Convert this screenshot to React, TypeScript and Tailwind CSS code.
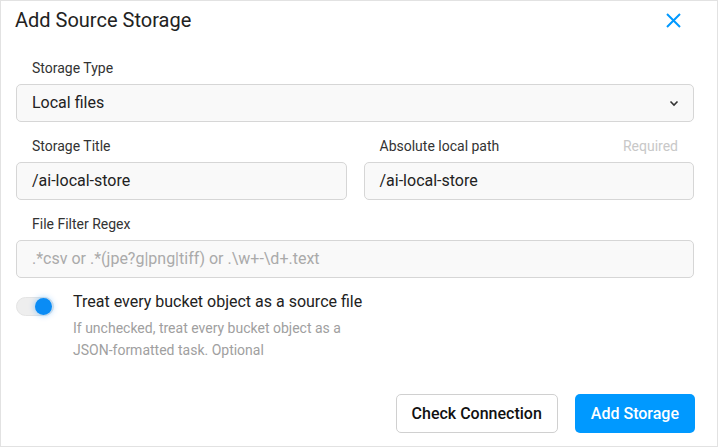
import React from "react";

function Field({ label, value, right, placeholder }: { label: string; value?: string; right?: string; placeholder?: string }) {
  return (
    <div className="flex flex-col">
      <div className="flex h-[20px] items-center justify-between px-[16px] text-[14px] leading-[20px]">
        <span className="text-[#333]">{label}</span>
        {right ? <span className="text-[#c8c8c8]">{right}</span> : null}
      </div>
      <div className="mt-[6px] flex h-[38px] items-center rounded-[5px] border border-[#d6d6d6] bg-[#f9f9f9] px-[15px] text-[16px]">
        {value ? <span className="text-[#222]">{value}</span> : <span className="text-[#aaa]">{placeholder}</span>}
      </div>
    </div>
  );
}

export default function App() {
  return (
    <div className="flex h-[447px] w-[718px] flex-col border border-[#e2e2e2] bg-white font-['Roboto','Liberation_Sans',sans-serif]">
      <div className="flex items-center justify-between pl-[14px] pr-[36px] pt-[7px]">
        <h1 className="text-[20px] leading-[24px] font-normal text-[#222]">Add Source Storage</h1>
        <svg width="15" height="15" viewBox="0 0 15 15" className="mt-[1px]">
          <path d="M1 1 L14 14 M14 1 L1 14" stroke="#0099ff" strokeWidth="2" strokeLinecap="butt" />
        </svg>
      </div>

      <div className="flex flex-1 flex-col pl-[15px] pr-[23px]">
        <div className="mt-[26px] flex flex-col">
          <div className="h-[20px] px-[16px] text-[14px] leading-[20px] text-[#333]">Storage Type</div>
          <div className="mt-[6px] flex h-[38px] items-center justify-between rounded-[5px] border border-[#d6d6d6] bg-[#f9f9f9] pl-[15px] pr-[14px] text-[16px] text-[#222]">
            <span>Local files</span>
            <svg width="10" height="7" viewBox="0 0 10 7">
              <path d="M1.5 1.5 L5 5 L8.5 1.5" fill="none" stroke="#333" strokeWidth="1.6" />
            </svg>
          </div>
        </div>

        <div className="mt-[14px] grid grid-cols-2 gap-x-[17px]">
          <Field label="Storage Title" value="/ai-local-store" />
          <Field label="Absolute local path" value="/ai-local-store" right="Required" />
        </div>

        <div className="mt-[14px]">
          <Field label="File Filter Regex" placeholder=".*csv or .*(jpe?g|png|tiff) or .\w+-\d+.text" />
        </div>

        <div className="mt-[13px] flex">
          <div className="mt-[6px] flex h-[19px] w-[38px] items-center justify-end rounded-full border border-[#e4e4e4] bg-[#eeeeee] pr-[1px]">
            <div className="h-[17px] w-[17px] rounded-full bg-[#0a8cf5] shadow-[0_0_6px_rgba(0,140,255,0.45)]" />
          </div>
          <div className="ml-[19px] flex flex-col">
            <div className="text-[16px] leading-[22px] text-[#222]">Treat every bucket object as a source file</div>
            <div className="mt-[4px] w-[290px] text-[14px] leading-[22px] text-[#a0a0a0]">
              If unchecked, treat every bucket object as a JSON-formatted task. Optional
            </div>
          </div>
        </div>

        <div className="mr-[-1px] mt-auto flex justify-end gap-[17px] pb-[13px]">
          <button className="h-[39px] rounded-[5px] border border-[#d0d0d0] bg-white px-[15px] text-[16px] font-medium text-[#111]">
            Check Connection
          </button>
          <button className="h-[39px] rounded-[5px] bg-[#0099ff] px-[16px] text-[16px] font-medium text-white">
            Add Storage
          </button>
        </div>
      </div>
    </div>
  );
}
